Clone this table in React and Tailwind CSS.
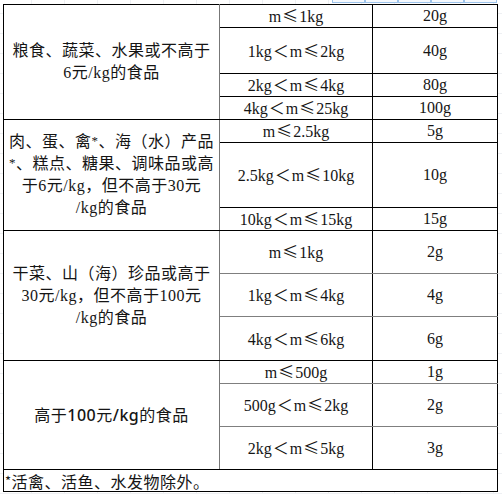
import React from 'react';

const cjk = "font-['Noto_Sans_CJK_SC',sans-serif]";

// wraps the full-width comparison signs so they fall back to the CJK face
const Range = ({ text }) => (
    <>
        {text.split(/([≤＜])/).map((part, i) =>
            part === '≤' || part === '＜'
                ? <span key={i} className={`${cjk} mx-[1px]`}>{part}</span>
                : <span key={i}>{part}</span>
        )}
    </>
);

const Star = () => <sup className="text-[13px] relative -top-[2px]">*</sup>;

const groups = [
    {
        label: <>粮食、蔬菜、水果或不高于<br />6元/kg的食品</>,
        rows: [
            { h: 'h-[22px]', range: 'm≤1kg', val: '20g' },
            { h: 'h-[46px]', range: '1kg＜m≤2kg', val: '40g' },
            { h: 'h-[22px]', range: '2kg＜m≤4kg', val: '80g' },
            { h: 'h-[23px]', range: '4kg＜m≤25kg', val: '100g' },
        ],
        line: 'border-b-black',
    },
    {
        label: <>肉、蛋、禽<Star />、海（水）产品<br /><Star />、糕点、糖果、调味品或高<br />于6元/kg，但不高于30元<br />/kg的食品</>,
        rows: [
            { h: 'h-[23px]', range: 'm≤2.5kg', val: '5g' },
            { h: 'h-[65px]', range: '2.5kg＜m≤10kg', val: '10g' },
            { h: 'h-[22px]', range: '10kg＜m≤15kg', val: '15g' },
        ],
        line: 'border-b-black',
    },
    {
        label: <>干菜、山（海）珍品或高于<br />30元/kg，但不高于100元<br />/kg的食品</>,
        rows: [
            { h: 'h-[43px]', range: 'm≤1kg', val: '2g' },
            { h: 'h-[43px]', range: '1kg＜m≤4kg', val: '4g' },
            { h: 'h-[44px]', range: '4kg＜m≤6kg', val: '6g' },
        ],
        line: 'border-b-[#7f7f7f]',
    },
    {
        label: <>高于<span className="font-['Noto_Sans',sans-serif] font-medium">100</span>元<span className="font-['Noto_Sans',sans-serif] font-medium">/kg</span>的食品</>,
        rows: [
            { h: 'h-[22px]', range: 'm≤500g', val: '1g' },
            { h: 'h-[43px]', range: '500g＜m≤2kg', val: '2g' },
            { h: 'h-[43px]', range: '2kg＜m≤5kg', val: '3g' },
        ],
        line: 'border-b-[#7f7f7f]',
    },
];

const App = () => {
    return (
        <div className="w-[502px] h-[494px] overflow-hidden bg-white bg-[linear-gradient(#eef0f3_1px,transparent_1px),linear-gradient(90deg,#eef0f3_1px,transparent_1px)] bg-[length:33px_20px] bg-[position:-2px_-7px]">
            {/* selected cells peeking above the table */}
            <div className="flex h-[4px] pl-[332px]">
                {[0, 1, 2, 3, 4].map((i) => (
                    <div key={i} className="w-[33px] h-[3px] border border-t-0 border-[#9cc2ea] bg-[#f4f8fd]"></div>
                ))}
            </div>
            <table className="ml-[3px] w-[494px] table-fixed border-collapse bg-white text-[#151515] font-['Liberation_Serif','Noto_Sans_CJK_SC',serif] text-[16px]">
                <colgroup>
                    <col className="w-[216px]" />
                    <col className="w-[153px]" />
                    <col className="w-[125px]" />
                </colgroup>
                <tbody>
                    {groups.map((g, gi) =>
                        g.rows.map((r, ri) => {
                            const last = ri === g.rows.length - 1;
                            const bottom = last ? 'border-b-black' : g.line;
                            return (
                                <tr key={`${gi}-${ri}`} className={r.h}>
                                    {ri === 0 && (
                                        <td
                                            rowSpan={g.rows.length}
                                            className="border border-l-black border-t-black border-b-black border-r-[#777] p-0 text-center align-middle leading-[22px] tracking-[0.5px] whitespace-nowrap"
                                        >
                                            {g.label}
                                        </td>
                                    )}
                                    <td className={`border border-l-[#777] border-r-black border-t-black ${bottom} p-0 text-center align-middle leading-[20px] whitespace-nowrap`}>
                                        <Range text={r.range} />
                                    </td>
                                    <td className={`border border-l-black border-r-black border-t-black ${bottom} p-0 text-center align-middle leading-[20px]`}>
                                        {r.val}
                                    </td>
                                </tr>
                            );
                        })
                    )}
                    <tr className="h-[22px]">
                        <td colSpan={3} className="border border-black border-t-[#333] p-0 pl-[1px] align-middle font-['Noto_Sans_CJK_SC',sans-serif] text-[16px] leading-[20px] tracking-[0.5px] whitespace-nowrap">
                            <sup className="text-[13px] relative -top-[2px]">*</sup>活禽、活鱼、水发物除外。
                        </td>
                    </tr>
                </tbody>
            </table>
        </div>
    );
};

export default App;
